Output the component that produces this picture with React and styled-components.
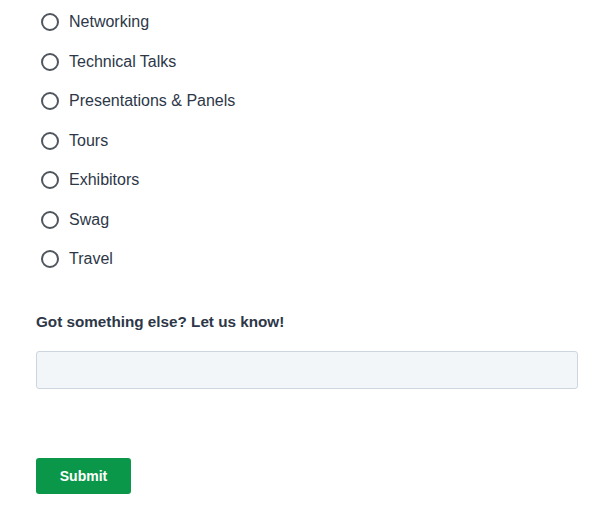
import React from "react";
import styled, { createGlobalStyle } from "styled-components";

const Global = createGlobalStyle`
  body {
    margin: 0;
    background: #ffffff;
    font-family: "Liberation Sans", Arial, sans-serif;
    color: #2d3748;
  }
`;

const Form = styled.form`
  width: 542px;
  padding: 10px 0 0 36px;
  display: flex;
  flex-direction: column;
`;

const Options = styled.div`
  display: flex;
  flex-direction: column;
  gap: 15.5px;
`;

const Option = styled.label`
  display: flex;
  align-items: center;
  height: 24px;
  gap: 10px;
  font-size: 16px;
  color: #2d3748;
  cursor: pointer;
`;

const Radio = styled.input.attrs({ type: "radio" })`
  appearance: none;
  margin: 0 0 0 5px;
  width: 18px;
  height: 18px;
  border: 2px solid #50565e;
  border-radius: 50%;
  background: #fff;
  box-sizing: border-box;
`;

const Label = styled.div`
  margin-top: 42px;
  font-size: 15.25px;
  font-weight: 700;
  color: #2d3748;
  line-height: 18px;
`;

const Input = styled.input`
  margin-top: 20px;
  height: 38px;
  box-sizing: border-box;
  border: 1px solid #cdd6e0;
  border-radius: 3px;
  background: #f3f6f9;
  font-size: 15px;
  padding: 0 10px;
`;

const Submit = styled.button`
  margin-top: 69px;
  align-self: flex-start;
  width: 95px;
  height: 36px;
  border: none;
  border-radius: 3px;
  background: #0a9749;
  color: #fff;
  font-family: "Liberation Sans", Arial, sans-serif;
  font-weight: 700;
  font-size: 14px;
`;

const items = [
  "Networking",
  "Technical Talks",
  "Presentations & Panels",
  "Tours",
  "Exhibitors",
  "Swag",
  "Travel",
];

export default function App() {
  return (
    <>
      <Global />
      <Form onSubmit={(e) => e.preventDefault()}>
        <Options>
          {items.map((item) => (
            <Option key={item}>
              <Radio name="interest" />
              {item}
            </Option>
          ))}
        </Options>
        <Label>Got something else? Let us know!</Label>
        <Input type="text" />
        <Submit type="submit">Submit</Submit>
      </Form>
    </>
  );
}
